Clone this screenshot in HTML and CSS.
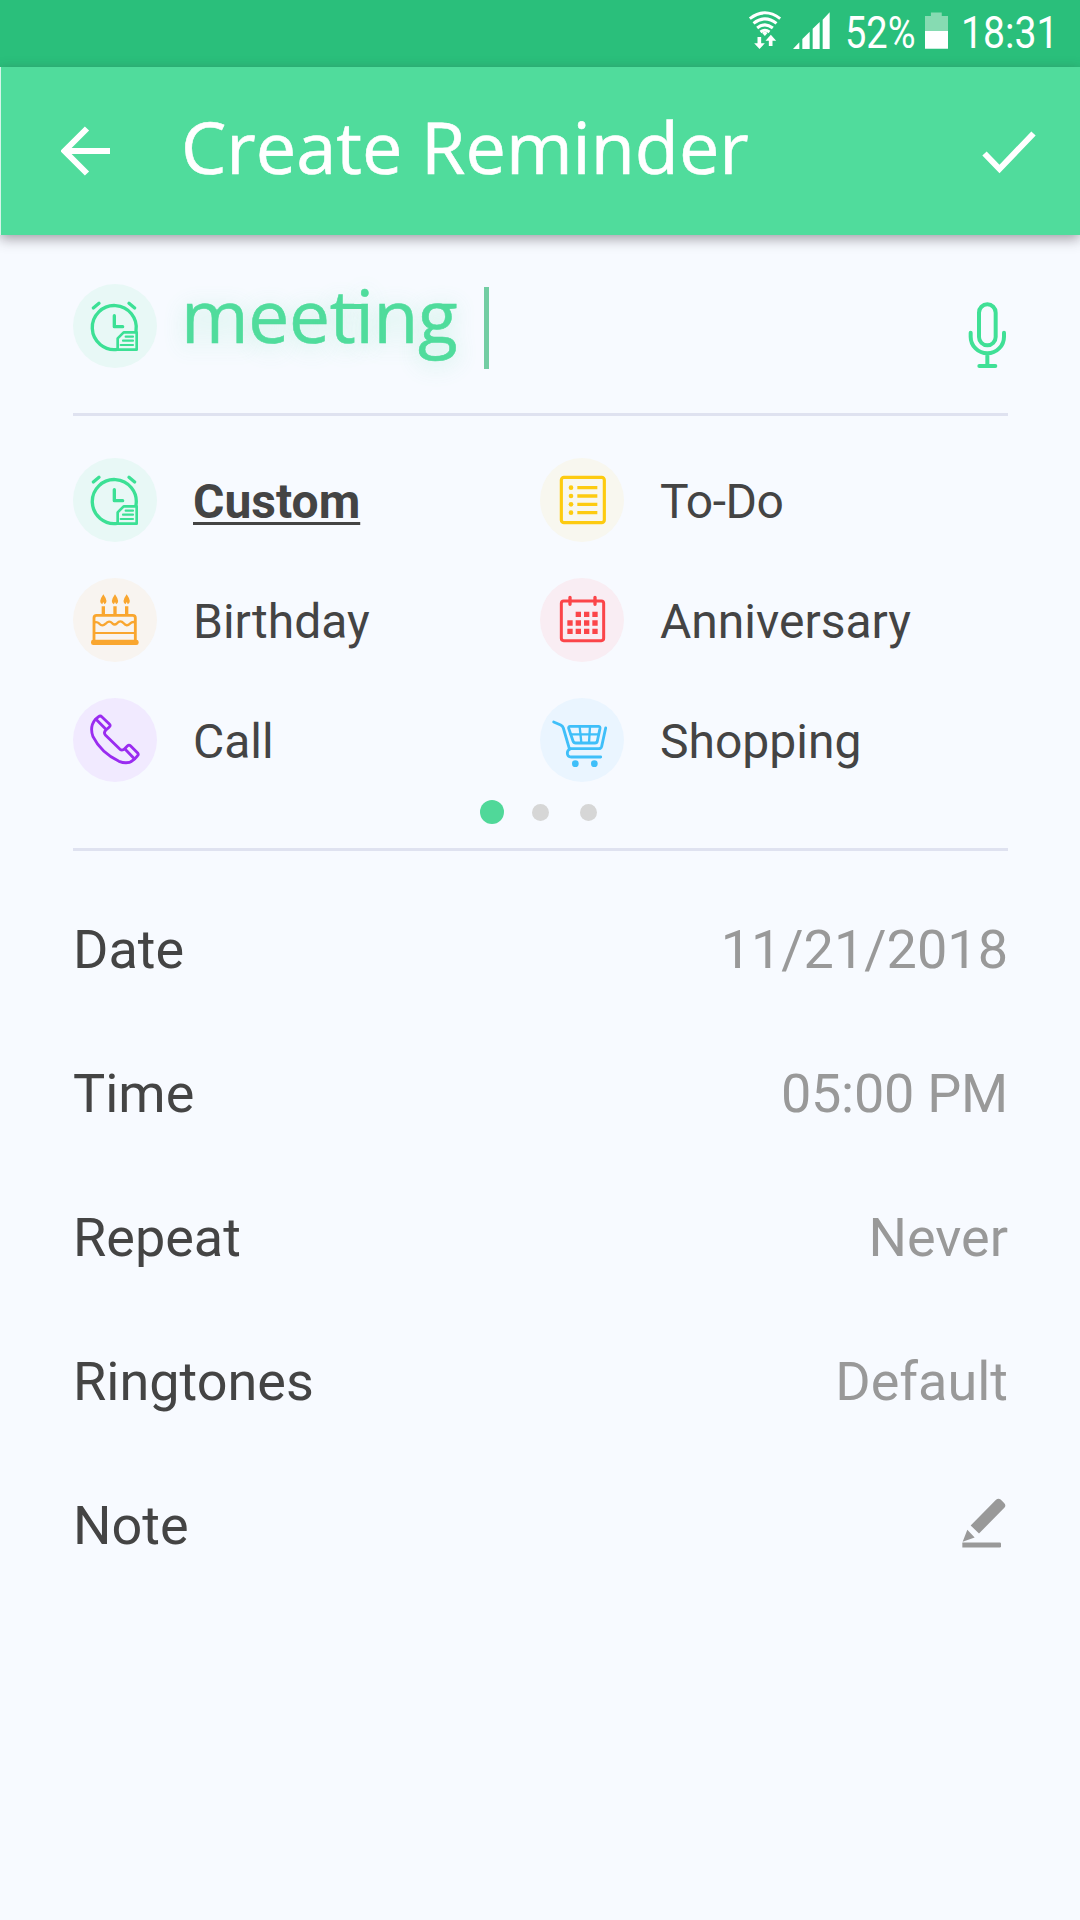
FILE: index.html
```html
<!DOCTYPE html>
<html lang="en">
<head>
<meta charset="utf-8">
<title>Create Reminder</title>
<link rel="stylesheet" href="styles.css">
</head>
<body>
<svg class="defs" aria-hidden="true">
  <symbol id="clock" viewBox="39 54 252 252">
    <g fill="none" stroke="currentColor" stroke-width="10" stroke-linecap="round" stroke-linejoin="round">
      <path d="M172 250 A66 66 0 1 1 228 195"/>
      <path d="M100 126 L117 112 M207 112 L224 126"/>
      <path d="M163 149 V182 H188"/>
      <path d="M173 251 V217 L191 199 H230 V251 Z" stroke-width="8"/>
      <path d="M197 212 H219 M189 224 H219 M182 237 H219" stroke-width="6.500"/>
    </g>
  </symbol>
</svg>
<div class="screen">
  <div class="status">
    <svg class="wifi" viewBox="84 33 101 117">
      <g fill="none" stroke="#fff" stroke-width="9">
        <path d="M89 56 Q134 21 180 56"/>
        <path d="M100 70 Q134 43 169 70"/>
        <path d="M111 84 Q134 65 158 84"/>
        <path d="M121 96 Q134 86 148 96"/>
      </g>
      <path fill="#fff" d="M126 99 Q134 92 142 99 L134 108 Z"/>
      <path fill="#fff" d="M112 111 H123 V130 H134 L118 147 L102 130 H112 Z M146 138 H157 V122 H168 L152 104 L136 122 H146 Z"/>
    </svg>
    <svg class="signal" viewBox="218 36 111 111">
      <path fill="#fff" d="M218 147 L237 127 V147 Z M246 147 V117 L268 95 V147 Z M277 147 V86 L298 66 V147 Z M307 147 V59 L328 37 V147 Z"/>
    </svg>
    <span class="pct"><span>52%</span></span>
    <svg class="battery" viewBox="615 36 70 111">
      <path fill="#86dbb2" d="M615 47 H633 V37 H666 V47 H685 V94 H615 Z"/>
      <path fill="#fff" d="M615 93 H685 V147 H615 Z"/>
    </svg>
    <span class="clock"><span>18:31</span></span>
  </div>

  <header class="bar">
    <svg class="back" viewBox="0 0 49 50">
      <path d="M49 25 H4 M26 2.5 L3.5 25 L26 47.500" fill="none" stroke="#fff" stroke-width="6"/>
    </svg>
    <h1 class="title">Create Reminder</h1>
    <svg class="done" viewBox="0 0 54 43">
      <path d="M2.500 22.500 L17.500 38 L51.500 2.500" fill="none" stroke="#fff" stroke-width="6"/>
    </svg>
  </header>

  <main class="content">
    <div class="entry">
      <span class="badge green"><svg><use href="#clock"/></svg></span>
      <span class="entry-text">mee<span class="ti">ti</span>ng</span>
      <span class="caret"></span>
      <svg class="mic" viewBox="113 66 117 201">
        <g fill="none" stroke="#40e096" stroke-width="12" stroke-linecap="round">
          <rect x="146" y="73" width="50" height="123" rx="25"/>
          <path d="M121 158 V170 A50 50 0 0 0 221 170 V158 M171 221 V258 M147 258 H195"/>
        </g>
      </svg>
    </div>

    <section class="types">
      <div class="grid">
        <div class="type">
          <span class="badge green"><svg><use href="#clock"/></svg></span>
          <span class="name selected">Custom</span>
        </div>
        <div class="type">
          <span class="badge yellow"><svg viewBox="30 54 252 252">
            <rect x="94" y="112" width="129" height="136" rx="8" fill="none" stroke="currentColor" stroke-width="9.500"/>
            <path d="M142 143 H202 M142 168 H202 M142 193 H202 M142 218 H202" stroke="currentColor" stroke-width="10"/>
            <g fill="currentColor"><circle cx="123" cy="143" r="7"/><circle cx="123" cy="168" r="7"/><circle cx="123" cy="193" r="7"/><circle cx="123" cy="218" r="7"/></g>
          </svg></span>
          <span class="name todo">To-Do</span>
        </div>
        <div class="type">
          <span class="badge orange"><svg viewBox="39 414 252 252">
            <g fill="none" stroke="currentColor" stroke-width="8.500" stroke-linejoin="round">
              <path d="M102 605 V534 Q102 526 110 526 H218 Q226 526 226 534 V605"/>
              <path d="M104 547 Q112 545 118 551 Q127 561 137 551 Q147 539 157 550 Q164 557 171 550 Q181 538 191 550 Q200 561 210 551 Q217 544 225 547" stroke-width="7"/>
              <path d="M103 579 H225" stroke-width="6"/>
              <path d="M130 525 V499 M165 525 V499 M200 525 V499" stroke-width="10"/>
            </g>
            <rect x="93" y="599" width="143" height="16" rx="7" fill="currentColor"/>
            <path fill="currentColor" d="M130 463 Q147 487 133 493 Q130 480 127 493 Q113 487 130 463 Z M165 463 Q182 487 168 493 Q165 480 162 493 Q148 487 165 463 Z M200 463 Q217 487 203 493 Q200 480 197 493 Q183 487 200 463 Z"/>
          </svg></span>
          <span class="name">Birthday</span>
        </div>
        <div class="type">
          <span class="badge red"><svg viewBox="30 414 252 252">
            <rect x="94" y="483" width="127" height="119" rx="7" fill="none" stroke="currentColor" stroke-width="9"/>
            <path d="M120 472 V493 M195 472 V493" stroke="currentColor" stroke-width="10" stroke-linecap="round"/>
            <path fill="currentColor" d="M137 515h16v16h-16z M162 515h16v16h-16z M187 515h16v16h-16z M112 541h16v16h-16z M137 541h16v16h-16z M162 541h16v16h-16z M187 541h16v16h-16z M112 566h16v16h-16z M137 566h16v16h-16z M162 566h16v16h-16z M187 566h16v16h-16z"/>
          </svg></span>
          <span class="name">Anniversary</span>
        </div>
        <div class="type">
          <span class="badge purple"><svg viewBox="39 774 252 252">
            <g fill="none" stroke="currentColor" stroke-width="8.500" stroke-linejoin="round" stroke-linecap="round">
              <path d="M106 838 L116 830 Q121 826 126 831 L148 852 Q153 857 148 861 L138 870 Q130 877 136 885 L180 928 Q187 933 194 926 L202 918 Q207 913 212 918 L233 939 Q237 944 232 948 L223 958 Q206 975 177 964 Q123 938 99 890 Q88 860 106 838 Z"/>
              <path d="M108 838 L137 867 M195 927 L223 956"/>
            </g>
          </svg></span>
          <span class="name">Call</span>
        </div>
        <div class="type">
          <span class="badge blue"><svg viewBox="30 774 252 252">
            <g fill="none" stroke="currentColor" stroke-width="8.500" stroke-linejoin="round" stroke-linecap="round">
              <path d="M71 846 L92 855 Q98 858 100 864 L118 926 H206 Q213 926 215 919 L227 864"/>
              <path d="M121 927 Q112 930 112 939 Q112 951 124 951 H212"/>
              <path d="M121 859 H205 Q211 859 210 865 L202 903 Q201 909 195 909 H137 Q131 909 129 903 L116 865 Q115 859 121 859 Z"/>
              <path d="M122 883 H205 M149 860 L154 908 M180 860 L177 908" stroke-width="7"/>
            </g>
            <g fill="currentColor"><circle cx="136" cy="971" r="10"/><circle cx="193" cy="971" r="10"/></g>
          </svg></span>
          <span class="name">Shopping</span>
        </div>
      </div>
      <div class="dots"><i class="dot active"></i><i class="dot"></i><i class="dot"></i></div>
    </section>

    <section class="fields">
      <div class="field"><span>Date</span><span class="value">11/21/2018</span></div>
      <div class="field"><span>Time</span><span class="value time">05:00 PM</span></div>
      <div class="field"><span>Repeat</span><span class="value">Never</span></div>
      <div class="field"><span>Ringtones</span><span class="value">Default</span></div>
      <div class="field"><span>Note</span>
        <svg class="pencil" viewBox="96 83 132 149">
          <path fill="#999" d="M122 165 L198 88 Q205 82 212 87 L223 98 Q229 105 223 112 L147 189 Z M112 178 L134 201 L98 214 Z"/>
          <path fill="#999" d="M97 216 H209 Q213 216 213 220 V227 Q213 231 209 231 H97 Z"/>
        </svg>
      </div>
    </section>
  </main>
</div>
</body>
</html>
```
FILE: styles.css
```css
* { box-sizing: border-box; }

body {
  margin: 0;
  background: #f7faff;
  font-family: Roboto, "Liberation Sans", sans-serif;
  color: #444;
}

svg { display: block; flex: none; }
.defs { width: 0; height: 0; position: absolute; }

.screen {
  width: 1080px;
  height: 1920px;
  overflow: hidden;
}

/* status bar */
.status {
  height: 67px;
  padding: 0 25px 0 748px;
  display: flex;
  align-items: flex-start;
  background: #2abf7b;
  color: #fff;
  font-size: 45px;
  line-height: 65px;
}
.wifi { width: 34px; height: 39px; margin-top: 11px; }
.signal { width: 37px; height: 37px; margin: 12px 0 0 11px; }
.pct, .clock { white-space: nowrap; flex: none; }
.pct { width: 71px; margin-left: 15px; }
.pct span, .clock span {
  display: inline-block;
  transform: scaleX(.845);
  transform-origin: 0 50%;
}
.battery { width: 23px; height: 37px; margin: 12px 0 0 9px; }
.clock { width: 92px; margin-left: 13px; }
.clock span { transform: scaleX(.87); }

/* title bar */
.bar {
  height: 168px;
  padding: 0 44px 0 60px;
  display: flex;
  align-items: center;
  background: #50dc9c;
  border-left: 1px solid #d5f5e8;
  box-shadow: 0 4px 12px rgba(60, 50, 60, .45);
  position: relative;
}
.back { width: 49px; height: 50px; }
.title {
  margin: 0 0 0 71px;
  padding-bottom: 8px;
  flex: 1;
  font: 400 72px/1.36 "Open Sans", sans-serif;
  color: #fff;
  white-space: nowrap;
  -webkit-text-stroke: .6px #fff;
}
.done { width: 54px; height: 43px; margin-top: 3px; }

.content { padding: 0 72px 0 73px; }

/* reminder name */
.entry {
  height: 181px;
  border-bottom: 3px solid #dfe2f0;
  display: flex;
  align-items: flex-start;
}
.entry .badge { margin-top: 49px; }
.entry-text {
  width: 327px;
  padding: 30px 0 0 24px;
  font: 400 73px/1.36 "Open Sans", sans-serif;
  color: #50dc9c;
  white-space: nowrap;
  letter-spacing: -.3px;
  -webkit-text-stroke: .6px #50dc9c;
  text-shadow: 0 4px 22px rgba(80, 220, 156, .3);
}
.ti { position: relative; }
.ti::after {
  content: "";
  position: absolute;
  left: 14px;
  right: 8px;
  top: 39px;
  height: 5px;
  background: #50dc9c;
}
.caret { width: 5px; height: 82px; margin-top: 52px; background: #72cda3; }
.mic { width: 39px; height: 67px; margin: 67px 1px 0 auto; }

/* category badges */
.badge {
  width: 84px;
  height: 84px;
  flex: none;
  border-radius: 50%;
}
.badge svg { width: 84px; height: 84px; }
.green { background: #e8f8f6; color: #3ce095; }
.yellow { background: #f8f7ef; color: #fdcb10; }
.orange { background: #f8f4f0; color: #f9a62f; }
.red { background: #f9edf3; color: #fb4549; }
.purple { background: #f1eaff; color: #9a2cf0; }
.blue { background: #eaf5ff; color: #3fbff9; }

.types {
  height: 435px;
  padding-top: 42px;
  border-bottom: 3px solid #dfe2f0;
}
.grid {
  display: grid;
  grid-template-columns: 467px 1fr;
  gap: 36px 0;
}
.type { display: flex; align-items: center; gap: 36px; font-size: 48px; }
.name { padding-top: 3px; }
.todo { letter-spacing: -.5px; }
.selected {
  font-weight: 700;
  text-decoration: underline;
  text-decoration-thickness: 3px;
  text-underline-offset: 4px;
}

.dots {
  height: 24px;
  margin: 18px 0 0 407px;
  display: flex;
  align-items: center;
  gap: 31px;
}
.dot { width: 17px; height: 17px; border-radius: 50%; background: #d6d6d6; }
.dot.active { width: 24px; height: 24px; margin-right: -3px; background: #50d899; }

/* detail rows */
.fields { padding-top: 26px; }
.field {
  height: 144px;
  display: flex;
  align-items: center;
  justify-content: space-between;
  font-size: 54px;
}
.value { color: #999; }
.time { letter-spacing: -.25px; }
.pencil { width: 44px; height: 50px; margin: 0 2px 4px 0; }
```
